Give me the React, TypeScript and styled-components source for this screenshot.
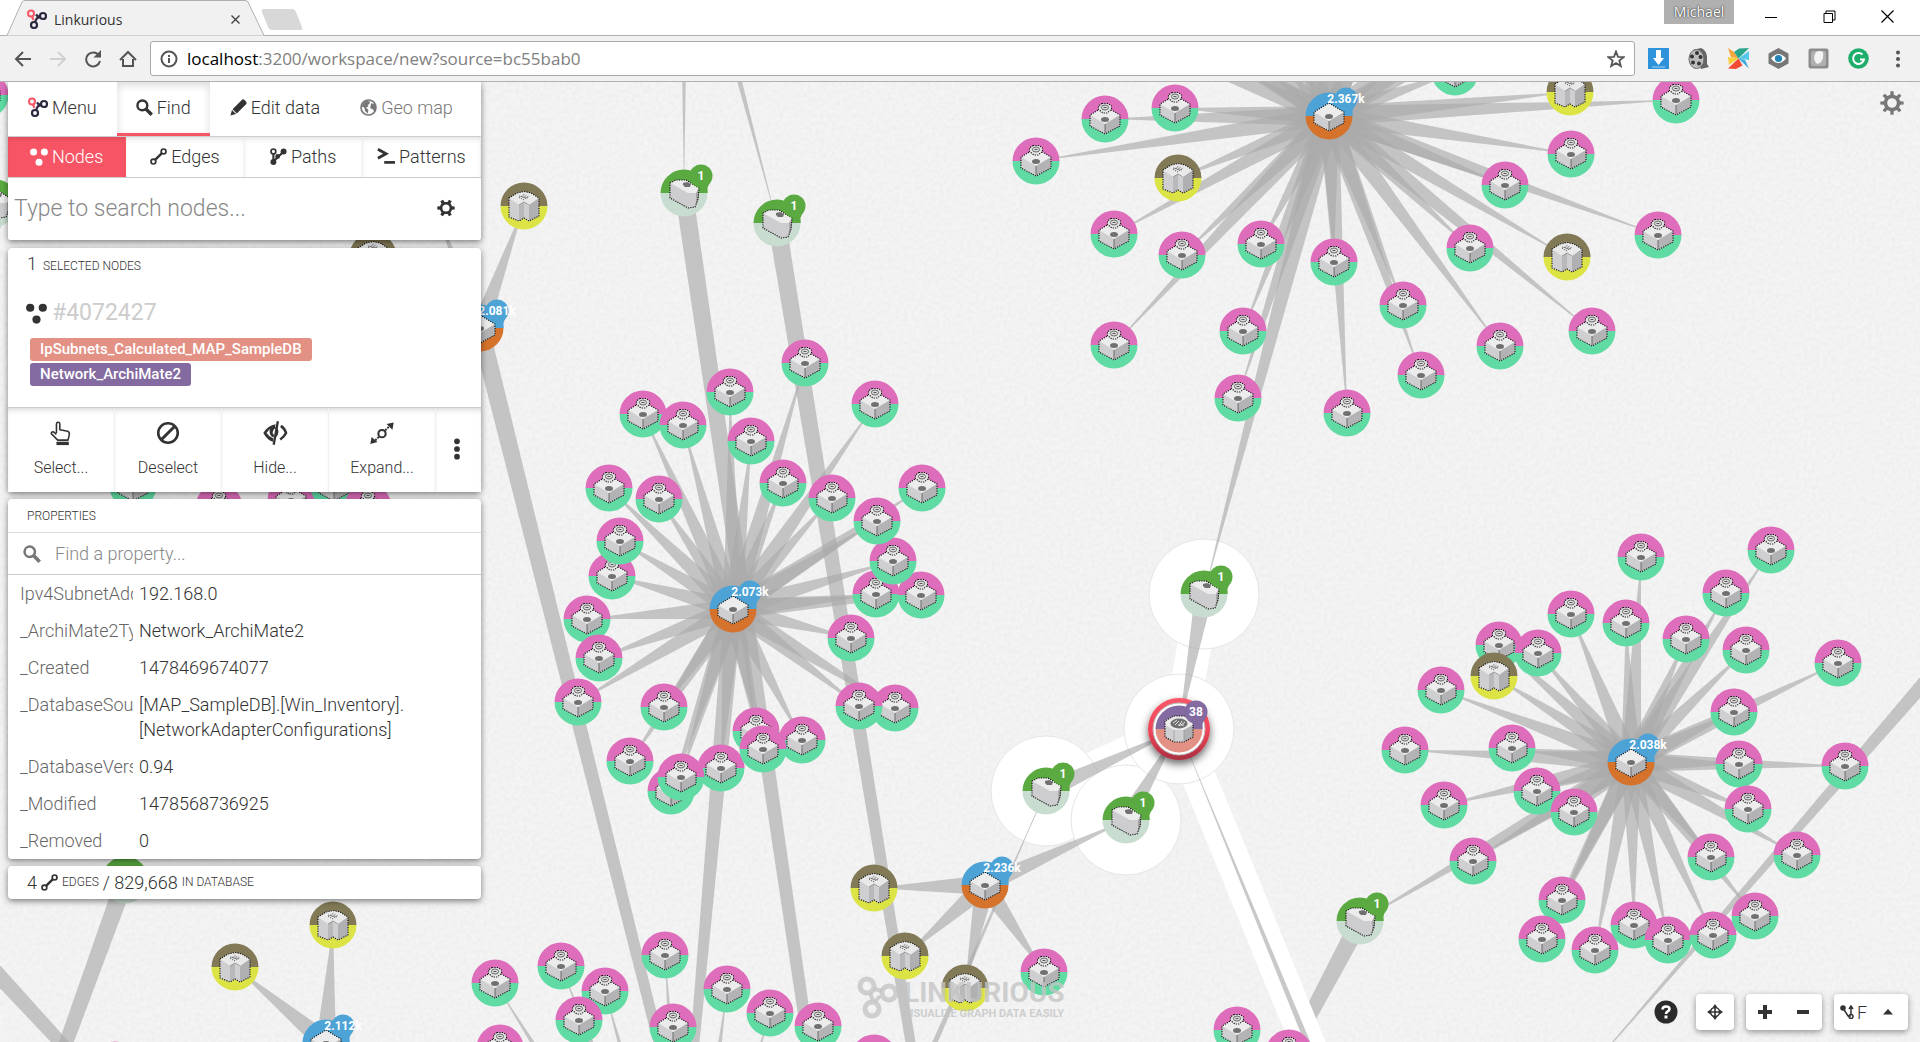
import React from "react";
import styled, { createGlobalStyle, css } from "styled-components";

const ui = `Roboto, "Liberation Sans", sans-serif`;
const system = `"Open Sans", "Noto Sans", sans-serif`;
const ink = "#333";
const accent = "#f75565";

const GlobalStyle = createGlobalStyle`
  *, *::before, *::after { box-sizing: border-box; }
  body { margin: 0; background: #f2f2f2; color: ${ink}; font-family: ${ui}; }
  button, input { font: inherit; color: inherit; }
  button { cursor: pointer; }
`;

/* ---------- browser frame ---------- */

const Page = styled.div`
  display: flex;
  flex-direction: column;
  height: 100vh;
  overflow: hidden;
`;

const TabStrip = styled.header`
  display: flex;
  align-items: flex-start;
  height: 36px;
  padding-left: 7px;
  background: #fff;
  border-bottom: 1px solid #b0b0b0;
  font-family: ${system};
`;

const BrowserTab = styled.div`
  display: grid;
  width: 258px;
  height: 36px;
  margin-bottom: -1px;
  > * { grid-area: 1 / 1; }
`;

const TabShape = styled.svg`
  width: 258px;
  height: 36px;
`;

const TabContent = styled.div`
  display: flex;
  align-items: center;
  gap: 7px;
  height: 36px;
  padding: 2px 25px 0 20px;
  font-size: 14px;
`;

const TabTitle = styled.span`
  flex: 1;
`;

const PlainButton = styled.button`
  display: grid;
  place-items: center;
  padding: 0;
  border: 0;
  background: none;
`;

const NewTab = styled.button`
  width: 34px;
  height: 21px;
  margin: 9px 0 0 0;
  padding: 0;
  border: 0;
  border-radius: 3px;
  background: #d8d8d8;
  transform: skewX(22deg);
`;

const WindowControls = styled.div`
  display: flex;
  align-items: flex-start;
  margin-left: auto;
  padding-right: 4px;
`;

const Profile = styled.button`
  width: 70px;
  height: 24px;
  margin-right: 8px;
  padding: 0;
  border: 0;
  background: #b0b0b0;
  color: #fff;
  font-size: 14px;
  line-height: 22px;
  text-shadow: 0 0 2px #333, 0 0 1px #333;
`;

const WindowButton = styled(PlainButton)`
  width: 58px;
  height: 33px;
`;

const AddressRow = styled.div`
  display: flex;
  align-items: center;
  height: 46px;
  padding: 0 2px 0 5px;
  background: #f1f1f1;
  border-bottom: 1px solid #b0b0b0;
  flex: none;
`;

const NavButton = styled(PlainButton)`
  width: 35px;
  height: 34px;
`;

const AddressBox = styled.div`
  display: flex;
  flex: 1;
  align-items: center;
  gap: 9px;
  height: 35px;
  margin: 0 3px 0 5px;
  padding: 0 9px;
  background: #fff;
  border: 1px solid #a9a9a9;
  border-radius: 3px;
  font-family: ${system};
  font-size: 17px;
`;

const Url = styled.span`
  flex: 1;
  color: #808080;
  strong { color: #000; font-weight: 400; }
`;

const ExtensionButton = styled(PlainButton)`
  width: 40px;
  height: 34px;
`;

/* ---------- workspace ---------- */

const Workspace = styled.main`
  display: grid;
  grid-template: minmax(0, 1fr) / minmax(0, 1fr);
  flex: 1;
  min-height: 0;
  overflow: hidden;
  > * { grid-area: 1 / 1; }
`;

const GraphCanvas = styled.svg`
  width: 100%;
  height: 100%;
  display: block;
`;

const Overlay = styled.div`
  display: flex;
  justify-content: space-between;
  padding: 0 12px 12px 8px;
  pointer-events: none;
  z-index: 1;
  > * { pointer-events: auto; }
`;

const SidePanel = styled.aside`
  display: flex;
  flex-direction: column;
  width: 473px;
  font-weight: 300;
`;

const Card = styled.section`
  background: #fff;
  border-radius: 4px;
  box-shadow: 0 2px 6px rgba(0, 0, 0, 0.5);
`;

const SearchCard = styled(Card)`
  border-radius: 0 0 2px 2px;
`;

const SelectionCard = styled(Card)`
  margin-top: 8px;
`;

const PropertyCard = styled(Card)`
  margin-top: 7px;
  padding-top: 1px;
`;

const SummaryCard = styled(Card)`
  margin-top: 7px;
  padding: 0 19px;
`;

const MainNav = styled.nav`
  display: flex;
  height: 55px;
  border-bottom: 1px solid #ccc;
`;

const MainNavItem = styled.button<{ $active?: boolean; $muted?: boolean }>`
  display: flex;
  align-items: center;
  gap: 4px;
  height: 54px;
  padding: 0 20px 4px;
  border: 0;
  background: #fff;
  font-size: 18px;
  color: ${(p) => (p.$muted ? "#777" : ink)};
  ${(p) =>
    p.$active &&
    css`
      padding: 0 19px;
      border-bottom: 3px solid ${accent};
      box-shadow: inset 0 3px 8px rgba(0, 0, 0, 0.15);
    `}
`;

const SubNav = styled.nav`
  display: grid;
  grid-template-columns: repeat(4, 1fr);
  height: 41px;
  border-bottom: 1px solid #ccc;
`;

const SubNavItem = styled.button<{ $active?: boolean }>`
  display: flex;
  align-items: center;
  justify-content: center;
  gap: 4px;
  padding: 0 0 1px;
  border: 0;
  border-right: 1px solid #f0f0f0;
  font-size: 18px;
  background: ${(p) => (p.$active ? accent : "#fff")};
  color: ${(p) => (p.$active ? "#fff" : ink)};
  box-shadow: inset 0 4px 6px -3px rgba(0, 0, 0, 0.15);
  ${(p) => p.$active && "border-right-color: transparent;"}
`;

const NodeSearch = styled.label`
  display: flex;
  align-items: center;
  height: 62px;
  padding: 0 26px 2px 6px;
`;

const TextInput = styled.input<{ $size: number }>`
  flex: 1;
  min-width: 0;
  padding: 0;
  border: 0;
  outline: 0;
  background: none;
  font-size: ${(p) => p.$size}px;
  &::placeholder { color: #888; opacity: 1; }
`;

const Heading = styled.h2`
  display: flex;
  align-items: baseline;
  gap: 6px;
  margin: 0;
  padding: 0 19px;
  font-size: 12px;
  font-weight: 300;
  line-height: 32px;
  text-transform: uppercase;
`;

const Count = styled.span`
  font-size: 18px;
`;

const NodeTitle = styled.div`
  display: flex;
  align-items: center;
  gap: 5px;
  margin-top: 17px;
  padding: 0 18px;
  font-size: 23px;
  font-weight: 400;
  line-height: 28px;
  color: #ccc;
`;

const TagList = styled.div`
  display: flex;
  flex-direction: column;
  align-items: flex-start;
  gap: 2px;
  padding: 11px 22px 21px;
`;

const Tag = styled.span<{ $color: string }>`
  height: 23px;
  padding: 0 10px;
  border-radius: 3px;
  background: ${(p) => p.$color};
  color: #fff;
  font-size: 15px;
  font-weight: 500;
  line-height: 23px;
`;

const Actions = styled.div`
  display: grid;
  grid-template-columns: repeat(4, 1fr) 45px;
  height: 85px;
  border-top: 1px solid #ccc;
`;

const ActionButton = styled.button`
  display: flex;
  flex-direction: column;
  align-items: center;
  justify-content: center;
  gap: 12px;
  padding: 0 0 3px;
  border: 0;
  border-right: 1px solid #f0f0f0;
  background: #fff;
  font-size: 16px;
  line-height: 20px;
  box-shadow: inset 0 5px 6px -4px rgba(0, 0, 0, 0.2);
  &:last-child { border-right: 0; padding-right: 4px; }
`;

const PropertySearch = styled.label`
  display: flex;
  align-items: center;
  gap: 14px;
  height: 43px;
  padding: 0 15px;
  border-top: 1px solid #ddd;
  border-bottom: 1px solid #ccc;
`;

const PropertyTable = styled.table`
  width: 100%;
  table-layout: fixed;
  border-collapse: collapse;
  font-size: 18px;
  line-height: 25px;
  text-align: left;
`;

const Key = styled.th`
  width: 125px;
  padding: 6px 0 6px 12px;
  color: #666;
  font-weight: 300;
  vertical-align: top;
  span { display: block; overflow: hidden; white-space: nowrap; }
`;

const Value = styled.td`
  padding: 6px;
`;

const Summary = styled.p`
  display: flex;
  align-items: center;
  gap: 4px;
  margin: 0;
  font-size: 12px;
  line-height: 33px;
  text-transform: uppercase;
`;

const RightTools = styled.div`
  display: flex;
  flex-direction: column;
  align-items: flex-end;
  justify-content: space-between;
`;

const SettingsButton = styled(PlainButton)`
  width: 32px;
  height: 41px;
  color: #777;
`;

const Tint = styled.span<{ $color: string }>`
  display: flex;
  color: ${(p) => p.$color};
`;

const ToolBar = styled.div`
  display: flex;
  align-items: center;
  gap: 12px;
`;

const HelpButton = styled(PlainButton)`
  margin-right: 6px;
`;

const ToolGroup = styled.div`
  display: flex;
  height: 36px;
  background: #fff;
  border-radius: 4px;
  box-shadow: 0 2px 6px rgba(0, 0, 0, 0.4);
`;

const ToolButton = styled(PlainButton)`
  width: 38px;
`;

const ModeButton = styled(PlainButton)`
  grid-auto-flow: column;
  justify-content: start;
  gap: 3px;
  width: 74px;
  padding-left: 6px;
  font-size: 18px;
  font-weight: 300;
`;

/* ---------- icons ---------- */

const Icon = ({ size = 20, children }: { size?: number; children: React.ReactNode }) => (
  <svg width={size} height={size} viewBox="0 0 20 20" fill="none" stroke="currentColor" strokeWidth="2" aria-hidden="true">
    {children}
  </svg>
);

const Logo = () => (
  <Icon>
    <g stroke="#2c2840" strokeWidth="2.2">
      <circle cx="16" cy="7" r="3" />
      <circle cx="7" cy="16" r="3" />
      <path d="M8 13l2-4M9.500 9.500L13 8M9 5.500q1.500 2 3.500 2.500" />
    </g>
    <circle cx="4" cy="4.500" r="3" stroke="#f75565" strokeWidth="2" />
    <path d="M5 7.500L6.500 11" stroke="#f75565" strokeWidth="2" />
  </Icon>
);

const SearchIcon = ({ size = 17 }: { size?: number }) => (
  <Icon size={size}>
    <circle cx="7.500" cy="7.500" r="5.800" strokeWidth="2.800" />
    <path d="M12 12l6.500 6.500" strokeWidth="4" />
  </Icon>
);

const PencilIcon = () => (
  <Icon size={17}>
    <path d="M14.500 0.500Q16 0 18 2T19.500 5.500L8 17L3 12ZM2.300 13l4.800 4.500L0.500 19.500Z" fill="currentColor" stroke="none" />
  </Icon>
);

const GlobeIcon = () => (
  <Icon size={17}>
    <circle cx="10" cy="10" r="8.800" />
    <path d="M3 6l4-4 5 1-1 3-2 1 1 2-3 1 3 3-1 4-3-3-1-4-3-1ZM13 5l4 1 2 5-2 4-2-3-3-1Z" fill="currentColor" stroke="none" />
  </Icon>
);

const NodesIcon = ({ size = 18 }: { size?: number }) => (
  <Icon size={size}>
    <g fill="currentColor" stroke="none">
      <circle cx="4" cy="4.500" r="3.900" />
      <circle cx="16" cy="4.500" r="3.900" />
      <circle cx="10" cy="15.800" r="3.900" />
    </g>
  </Icon>
);

const EdgeIcon = () => (
  <Icon size={17}>
    <circle cx="16" cy="4" r="2.800" />
    <circle cx="4" cy="16" r="2.800" />
    <path d="M6 14l8-8" strokeWidth="2.800" />
  </Icon>
);

const PathIcon = () => (
  <Icon size={17}>
    <circle cx="4" cy="4" r="2.800" />
    <circle cx="16" cy="4" r="3.500" fill="currentColor" stroke="none" />
    <circle cx="4" cy="16.500" r="3.500" fill="currentColor" stroke="none" />
    <path d="M4 16V7M16 4L4 16" strokeWidth="2.500" />
    <circle cx="9" cy="10" r="1.800" fill="currentColor" />
  </Icon>
);

const PatternIcon = () => (
  <Icon size={18}>
    <path d="M1 1.500l9 5-9 5" strokeWidth="3.200" />
    <path d="M8 16h12" strokeWidth="3" />
  </Icon>
);

const cogPath = (teeth: number, outer: number, inner: number) => {
  const points: string[] = [];
  const step = (Math.PI * 2) / teeth;
  for (let i = 0; i < teeth; i++) {
    const a = i * step - Math.PI / 2 + (teeth === 6 ? step / 2 : 0);
    [[-0.26, inner], [-0.17, outer], [0.17, outer], [0.26, inner]].forEach(([o, r]) => {
      points.push(`${(10 + Math.cos(a + o * step) * r).toFixed(2)} ${(10 + Math.sin(a + o * step) * r).toFixed(2)}`);
    });
  }
  return `M${points.join("L")}Z`;
};

const CogIcon = ({ size, teeth, hole = 3.6 }: { size: number; teeth: number; hole?: number }) => (
  <Icon size={size}>
    <path d={`${cogPath(teeth, 9.8, 7)}M${10 - hole} 10a${hole} ${hole} 0 1 0 ${hole * 2} 0a${hole} ${hole} 0 1 0 ${-hole * 2} 0Z`} fill="currentColor" fillRule="evenodd" stroke="none" />
  </Icon>
);

const HandIcon = () => (
  <Icon size={26}>
    <path d="M6.500 10V3a1.300 1.300 0 0 1 2.600 0v4.500l6 1.200q1.500.5 1.300 2.300l-1 4.500H7.500L2.500 10.500q-.2-1.500 1.500-1.500l2.500 2" strokeWidth="1.200" strokeLinejoin="round" />
    <path d="M6.500 18h9.500" strokeWidth="2.600" />
  </Icon>
);

const BanIcon = () => (
  <Icon size={26}>
    <circle cx="10" cy="10" r="7.500" strokeWidth="2" />
    <path d="M5 15L15 5" strokeWidth="2.300" />
  </Icon>
);

const HideIcon = () => (
  <Icon size={26}>
    <path d="M12.200 1L9 19" strokeWidth="1.800" />
    <path d="M10.500 3.200Q4.500 4 1 10q3 5.500 7.500 6.800V14Q5.500 13 3.500 10 5 8 6 7Q5 12 8.800 13.500L9.300 11.500Q7 10 9.500 7Z" fill="currentColor" stroke="none" />
    <path d="M14.500 4.500Q17.500 6.500 18.500 10q-1.500 3-4.500 5" strokeWidth="2" />
    <path d="M9 5.500Q12.500 6.500 12 9.500T10 12.500" strokeWidth="1.200" />
  </Icon>
);

const ExpandIcon = () => (
  <Icon size={26}>
    <circle cx="10" cy="10.500" r="2.800" strokeWidth="1.600" />
    <path d="M12.500 8l3.500-3.500M7.500 13l-3.500 3.500" strokeWidth="1.500" strokeDasharray="1.500 .8" />
    <path d="M13.500 3l5.500-1-1 5.500ZM2 13l-1 5.500 5.500-1.500Z" fill="currentColor" stroke="none" />
  </Icon>
);

const DotsIcon = () => (
  <Icon size={22}>
    <g fill="currentColor" stroke="none">
      <circle cx="10" cy="3" r="2.600" />
      <circle cx="10" cy="10" r="2.600" />
      <circle cx="10" cy="17" r="2.600" />
    </g>
  </Icon>
);

/* ---------- graph ---------- */

type Point = [number, number];
type Kind = "host" | "hub" | "building" | "wedge" | "selected";
type GraphNode = { at: Point; kind: Kind; badge?: string };
type Edge = { from: Point; to: Point; width?: number };

const hubWest: Point = [733, 609];
const hubNorth: Point = [1329, 116];
const hubEast: Point = [1631, 762];
const hubSouth: Point = [985, 885];
const hubPanel: Point = [480, 328];
const hubCorner: Point = [326, 1043];
const hubBelow: Point = [688, 1290];
const picked: Point = [1179, 729];
const wedgeTop: Point = [1204, 594];
const wedgeLeft: Point = [1046, 791];
const wedgeMid: Point = [1126, 820];
const wedgeEast: Point = [1360, 921];

const westHosts: Point[] = [
  [609, 488], [659, 499], [612, 576], [620, 541], [587, 619], [599, 658], [578, 702], [664, 707],
  [630, 761], [671, 791], [721, 768], [681, 777], [756, 731], [802, 740], [763, 749], [895, 708],
  [859, 706], [851, 638], [876, 594], [921, 595], [893, 561], [922, 488], [877, 521], [832, 498],
  [783, 483], [751, 441], [643, 414], [683, 425], [730, 392], [805, 363], [875, 404],
];
const northHosts: Point[] = [
  [1105, 119], [1175, 108], [1036, 161], [1114, 234], [1182, 255], [1261, 244], [1334, 262],
  [1243, 331], [1114, 345], [1238, 398], [1347, 413], [1403, 305], [1421, 375], [1500, 346],
  [1592, 331], [1470, 248], [1658, 235], [1505, 185], [1571, 154], [1676, 100], [1455, 72],
];
const northBuildings: Point[] = [[1178, 178], [1567, 257], [1570, 92]];
const northBeyond: Point[] = [
  [1090, 20], [1130, 0], [1170, -20], [1230, -20], [1270, -60], [1310, -80], [1360, -80], [1400, -40],
  [1440, 20], [1500, 10], [1560, -10], [1200, 40], [1240, -90], [1420, -90],
];
const eastHosts: Point[] = [
  [1641, 557], [1771, 550], [1726, 593], [1571, 614], [1626, 623], [1686, 639], [1746, 650], [1838, 663],
  [1499, 645], [1538, 653], [1441, 690], [1734, 712], [1405, 750], [1512, 748], [1739, 764], [1845, 766],
  [1537, 791], [1574, 812], [1444, 805], [1748, 809], [1711, 857], [1797, 855], [1473, 861], [1562, 900],
  [1542, 939], [1595, 950], [1634, 925], [1668, 940], [1713, 935], [1755, 916],
];
const eastBuilding: Point = [1494, 676];
const belowHosts: Point[] = [
  [495, 983], [561, 966], [605, 991], [579, 1020], [665, 955], [673, 1027], [727, 989], [770, 1013],
  [818, 1026], [500, 1048], [874, 1058],
];
const southBuildings: Point[] = [[874, 888], [905, 956], [965, 988]];
const southHost: Point = [1044, 972];
const strayHosts: Point[] = [
  [1237, 1030], [1289, 1053], [-15, 95], [115, 1065], [133, 486], [219, 507], [291, 500], [334, 486], [368, 507],
];
const strayBuildings: Point[] = [[524, 206], [373, 256], [235, 967], [333, 925]];

const fan = (from: Point, targets: Point[]): Edge[] => targets.map((to) => ({ from, to, width: 20 }));

const edges: Edge[] = [
  ...fan(hubWest, westHosts),
  ...fan(hubNorth, [...northHosts, ...northBuildings, ...northBeyond]),
  ...fan(hubEast, [...eastHosts, eastBuilding, wedgeEast]),
  ...fan(hubBelow, belowHosts),
  ...fan(hubSouth, [...southBuildings, southHost]),
  ...fan(hubCorner, [[235, 967], [333, 925]]),
  { from: hubPanel, to: [524, 206] },
  { from: hubPanel, to: [905, 2028] },
  { from: hubPanel, to: [440, 220] },
  { from: [684, 193], to: [1041, 2638] },
  { from: [777, 223], to: [1075, 2053] },
  { from: hubWest, to: [657, 1475] },
  { from: [684, -600], to: [684, 193], width: 24 },
  { from: [586, -500], to: [777, 223], width: 24 },
  { from: [125, 880], to: [-150, 1640] },
  { from: [-60, 912], to: [400, 1410] },
  { from: [-60, 360], to: [10, 203] },
  { from: wedgeEast, to: [1120, 1374] },
  { from: [2030, 561], to: [1580, 1080] },
  { from: [680, 1619], to: wedgeLeft, width: 17 },
];

const litEdges: Edge[] = [
  { from: wedgeTop, to: picked },
  { from: wedgeLeft, to: picked },
  { from: wedgeMid, to: picked },
  { from: [1589, 1729], to: picked },
];

const passingEdges: Edge[] = [
  { from: hubNorth, to: wedgeTop, width: 22 },
  { from: hubSouth, to: wedgeMid },
];

const nodes: GraphNode[] = [
  ...[...strayHosts, ...westHosts, ...northHosts, ...eastHosts, ...belowHosts].map((at) => ({ at, kind: "host" as Kind })),
  ...[...northBuildings, ...southBuildings, eastBuilding, ...strayBuildings].map((at) => ({ at, kind: "building" as Kind })),
  { at: southHost, kind: "host" },
  { at: [-5, 203], kind: "wedge" },
  { at: [125, 880], kind: "wedge" },
  { at: [684, 193], kind: "wedge", badge: "1" },
  { at: [777, 223], kind: "wedge", badge: "1" },
  { at: wedgeTop, kind: "wedge", badge: "1" },
  { at: wedgeLeft, kind: "wedge", badge: "1" },
  { at: wedgeMid, kind: "wedge", badge: "1" },
  { at: wedgeEast, kind: "wedge", badge: "1" },
  { at: hubWest, kind: "hub", badge: "2.073k" },
  { at: hubNorth, kind: "hub", badge: "2.367k" },
  { at: hubEast, kind: "hub", badge: "2.038k" },
  { at: hubSouth, kind: "hub", badge: "2.236k" },
  { at: hubPanel, kind: "hub", badge: "2.081k" },
  { at: hubCorner, kind: "hub", badge: "2.112k" },
  { at: picked, kind: "selected", badge: "38" },
];

const palette: Record<Kind, [string, string]> = {
  host: ["#de6dbb", "#60dba4"],
  hub: ["#4ea3d6", "#d5722b"],
  building: ["#827956", "#dce344"],
  wedge: ["#5aaa41", "#c8ddd0"],
  selected: ["#836aa0", "#e39184"],
};

/** An edge is a sliver: full width at its source, a point at its target. */
const sliver = ({ from, to, width = 18 }: Edge) => {
  const dx = to[0] - from[0];
  const dy = to[1] - from[1];
  const k = width / 2 / Math.hypot(dx, dy);
  return `${from[0] - dy * k},${from[1] + dx * k} ${to[0]},${to[1]} ${from[0] + dy * k},${from[1] - dx * k}`;
};

const Slivers = ({ list }: { list: Edge[] }) => (
  <g fill="#aaa" fillOpacity="0.65">
    {list.map((e, i) => (
      <polygon key={i} points={sliver(e)} />
    ))}
  </g>
);

const dotted = { stroke: "#111", strokeWidth: 1.1, strokeDasharray: "1.200 1.200" };

const Glyphs = () => (
  <defs>
    <g id="glyph-box">
      <path d="M0-13L15-4V7L0 15L-15 7V-4Z" fill="#ececec" />
      <path d="M-15-4L0 5V15L-15 7Z" fill="#cfcfd1" />
      <path d="M15-4L0 5V15L15 7Z" fill="#b3b3b5" />
      <path d="M0-13L15-4V7L0 15L-15 7V-4Z" fill="none" {...dotted} />
      <path d="M0 5V14" stroke="#555" strokeWidth=".8" />
      <ellipse cx="0" cy="0.500" rx="4" ry="2.500" fill="#707070" />
    </g>
    <g id="glyph-host">
      <use href="#glyph-box" />
      <path d="M-3-15.500H3L6.500-13V-9.500L2-6H-2L-6.500-9.500V-13Z" fill="#e4e4e4" {...dotted} />
      <ellipse cx="0" cy="-11.500" rx="3.600" ry="2.500" fill="#ddd" stroke="#666" strokeWidth="1" />
      <path d="M-1.500-11.500H1.500" stroke="#555" strokeWidth="1" />
    </g>
    <g id="glyph-building">
      <path d="M-15-8L-7-13L0-14.500L7-13L15-8V10L5 15L0 12L-5 15L-15 11Z" fill="#e9e9e9" />
      <path d="M-15-8L-5-1V15L-15 11ZM0-4L5 0V15L0 12Z" fill="#cfcfd1" />
      <path d="M-5-1L0-4V12L-5 15Z" fill="#b9b9bb" />
      <path d="M15-8L5-1V15L15 10Z" fill="#b0b0b2" />
      <path d="M-15-8L-7-13L0-14.500L7-13L15-8V10L5 15L0 12L-5 15L-15 11Z" fill="none" {...dotted} />
      <path d="M-5-1L0-4L5-1" fill="none" stroke="#888" strokeWidth=".8" />
      <path d="M-5-8L1-12M-3-7L3-11M-1-6L5-10M-5-10L4-8" stroke="#666" strokeWidth="1" strokeDasharray="1.500 1" />
    </g>
    <g id="glyph-wedge">
      <path d="M-14-10L-8-13L2-13L15-5L14 6L11 14L4 15L-14 5Z" fill="#cdcdd0" />
      <path d="M-14-10L-8-13L2-13L15-5L12 0L4 0Z" fill="#ececec" />
      <path d="M15-5L12 0V13L15 5Z" fill="#a8a8aa" />
      <path d="M-14-10L-8-13L2-13L15-5L14 6L11 14L4 15L-14 5Z" fill="none" {...dotted} />
      <path d="M-1-10L3-11L7-9L6-6L1-6L-1-8Z" fill="#707070" />
    </g>
    <g id="glyph-selected">
      <path d="M-5-13H5L14-8V8L5 13H-5L-14 8V-8Z" fill="#cfcfd1" />
      <path d="M-5-13H5L14-8V-4L5 1H-5L-14-4V-8Z" fill="#ebebeb" />
      <path d="M14-4L5 1V13L14 8Z" fill="#b0b0b2" />
      <path d="M-5-13H5L14-8V8L5 13H-5L-14 8V-8Z" fill="none" {...dotted} />
      <path d="M-5 1V13M5 1V13" stroke="#999" strokeWidth=".8" />
      <ellipse cx="0" cy="-5.500" rx="8.500" ry="5" fill="#6f6f6f" />
      <path d="M-6-6L-2-9M-4-4L0-8M2-4L6-7M3-8L0-3M-1-4H5" stroke="#e4e4e4" strokeWidth="1" />
    </g>
    <linearGradient id="ring" x1="0" y1="0" x2="0" y2="1">
      <stop offset="0" stopColor="#f95768" />
      <stop offset=".55" stopColor="#f04457" />
      <stop offset="1" stopColor="#a82f40" />
    </linearGradient>
    <filter id="drop" x="-50%" y="-50%" width="200%" height="200%">
      <feDropShadow dx="0" dy="4" stdDeviation="4" floodColor="#000" floodOpacity="0.6" />
    </filter>
    <filter id="paper" x="0" y="0" width="100%" height="100%">
      <feTurbulence type="fractalNoise" baseFrequency="0.25" numOctaves="2" stitchTiles="stitch" />
      <feColorMatrix type="matrix" values="0 0 0 0 0.5  0 0 0 0 0.5  0 0 0 0 0.5  0.22 0 0 0 -0.07" />
    </filter>
  </defs>
);

const glyphOf: Record<Kind, string> = {
  host: "#glyph-host",
  hub: "#glyph-box",
  building: "#glyph-building",
  wedge: "#glyph-wedge",
  selected: "#glyph-selected",
};

const NodeMark = ({ at, kind, badge }: GraphNode) => {
  const [top, bottom] = palette[kind];
  return (
    <g transform={`translate(${at[0]} ${at[1]})`}>
      {kind === "selected" && (
        <>
          <circle r="31" fill="url(#ring)" filter="url(#drop)" />
          <circle r="26" fill="#fff" stroke="#bbb" strokeWidth="1" />
        </>
      )}
      <path d="M-23.500 0a23.500 23.500 0 0 1 47 0Z" fill={top} />
      <path d="M-23.500 0a23.500 23.500 0 0 0 47 0Z" fill={bottom} />
      <use href={glyphOf[kind]} />
      {badge && (
        <>
          <circle cx="17" cy="-17" r="11.500" fill={top} />
          <path d="M17-12H26L23.500-5V0H17Z" fill={top} />
          <text x="17" y="-13" textAnchor="middle" fill="#fff" fontFamily={ui} fontWeight="700" fontSize="12">
            {badge}
          </text>
        </>
      )}
    </g>
  );
};

const Graph = () => (
  <GraphCanvas role="img" aria-label="Network graph">
    <Glyphs />
    <rect width="100%" height="100%" fill="#f4f4f4" />
    <rect width="100%" height="100%" filter="url(#paper)" />
    <g transform="translate(0 -82)">
      <Slivers list={edges} />
      <g stroke="#fff" strokeWidth="34">
        {litEdges.map((e, i) => (
          <line key={i} x1={e.from[0]} y1={e.from[1]} x2={e.to[0]} y2={e.to[1]} />
        ))}
      </g>
      <g fill="#fff" stroke="#e6e6e6" strokeWidth="1">
        {[wedgeTop, wedgeLeft, wedgeMid, picked].map(([x, y], i) => (
          <circle key={i} cx={x} cy={y} r="55" />
        ))}
      </g>
      <line x1="1046" y1="791" x2="1008" y2="876" stroke="#c3c3c3" strokeWidth="1" />
      <Slivers list={[...passingEdges, ...litEdges]} />
      {nodes.map((n, i) => (
        <NodeMark key={i} {...n} />
      ))}
      <g fill="#c4c4c4" fillOpacity="0.8" fontFamily={ui} fontWeight="700">
        <g fill="none" stroke="#c4c4c4" strokeOpacity="0.8" strokeWidth="5">
          <circle cx="867" cy="986" r="7" />
          <circle cx="889" cy="993" r="7" />
          <circle cx="872" cy="1009" r="7" />
          <path d="M870 993L873 1001M880 996L875 1002M874 989L882 991" strokeWidth="4" />
        </g>
        <text x="904" y="1002" fontSize="28">LINKURIOUS</text>
        <text x="903" y="1017" fontSize="11">VISUALIZE GRAPH DATA EASILY</text>
      </g>
    </g>
  </GraphCanvas>
);

/* ---------- data ---------- */

const properties: [string, string][] = [
  ["Ipv4SubnetAddress", "192.168.0"],
  ["_ArchiMate2Type", "Network_ArchiMate2"],
  ["_Created", "1478469674077"],
  ["_DatabaseSource", "[MAP_SampleDB].[Win_Inventory].[NetworkAdapterConfigurations]"],
  ["_DatabaseVersion", "0.94"],
  ["_Modified", "1478568736925"],
  ["_Removed", "0"],
];

const Browser = () => (
  <>
    <TabStrip>
      <BrowserTab>
        <TabShape viewBox="0 0 258 36" aria-hidden="true">
          <path d="M0 35.500L15 2Q16 .5 18 .5H238Q240 .5 241 2L257 35.500" fill="#f1f1f1" stroke="#b0b0b0" />
        </TabShape>
        <TabContent>
          <Logo />
          <TabTitle>Linkurious</TabTitle>
          <PlainButton aria-label="Close tab">
            <svg width="9" height="9" viewBox="0 0 9 9" stroke="#444" strokeWidth="1.400"><path d="M.5.5l8 8M8.500.5l-8 8" /></svg>
          </PlainButton>
        </TabContent>
      </BrowserTab>
      <NewTab aria-label="New tab" />
      <WindowControls>
        <Profile>Michael</Profile>
        <WindowButton aria-label="Minimize">
          <svg width="12" height="12" stroke="#000"><path d="M0 6.500h12" /></svg>
        </WindowButton>
        <WindowButton aria-label="Restore">
          <svg width="13" height="13" fill="none" stroke="#000"><path d="M1 3.500h8.500v9h-8.500ZM3 3.500v-2.500h9v9h-2.500" /></svg>
        </WindowButton>
        <WindowButton aria-label="Close">
          <svg width="13" height="13" stroke="#000" strokeWidth="1.200"><path d="M.5.5l12 12M12.500.5l-12 12" /></svg>
        </WindowButton>
      </WindowControls>
    </TabStrip>
    <AddressRow>
      <NavButton aria-label="Back">
        <svg width="18" height="18" fill="none" stroke="#555" strokeWidth="2"><path d="M17 9H2M9 2L2 9l7 7" /></svg>
      </NavButton>
      <NavButton aria-label="Forward" disabled>
        <svg width="18" height="18" fill="none" stroke="#d0d0d0" strokeWidth="2"><path d="M1 9h15M9 2l7 7-7 7" /></svg>
      </NavButton>
      <NavButton aria-label="Reload">
        <svg width="18" height="18" fill="none" stroke="#555" strokeWidth="2"><path d="M15 5.500A7 7 0 1 0 16 11" /><path d="M17 0v7.500H9.500Z" fill="#555" stroke="none" /></svg>
      </NavButton>
      <NavButton aria-label="Home">
        <svg width="18" height="18" fill="none" stroke="#555" strokeWidth="2"><path d="M1 10L9 2l8 8M4 9v7h10V9" /></svg>
      </NavButton>
      <AddressBox>
        <svg width="18" height="18" fill="none" stroke="#555" strokeWidth="2"><circle cx="9" cy="9" r="7.500" /><path d="M9 8v5M9 5v2" /></svg>
        <Url><strong>localhost</strong>:3200/workspace/new?source=bc55bab0</Url>
        <PlainButton aria-label="Bookmark">
          <svg width="18" height="18" viewBox="0 0 18 18" fill="none" stroke="#555" strokeWidth="1.800"><path d="M9 1.500l2 5.300 5.700.3-4.400 3.500 1.500 5.500L9 13l-4.800 3.100 1.500-5.500L1.300 7.100 7 6.800Z" /></svg>
        </PlainButton>
      </AddressBox>
      <ExtensionButton aria-label="Downloads">
        <svg width="21" height="21"><rect width="21" height="21" fill="#2f93dc" /><path d="M8 2h5v8h3l-5.500 7L5 10h3Z" fill="#fff" /><path d="M4 19h13" stroke="#a5d3f5" /></svg>
      </ExtensionButton>
      <ExtensionButton aria-label="Video">
        <svg width="21" height="21"><path d="M5 2L13 0q5 2 6 8v8l2 3-8 2Z" fill="#666" /><ellipse cx="8.500" cy="11" rx="7.500" ry="9.500" fill="#bcbcbc" stroke="#666" /><g fill="#333"><circle cx="9" cy="5" r="2" /><circle cx="4" cy="8.500" r="2" /><circle cx="12.500" cy="9" r="2" /><circle cx="5" cy="14.500" r="2" /><circle cx="11" cy="15.500" r="2" /></g></svg>
      </ExtensionButton>
      <ExtensionButton aria-label="Pinwheel">
        <svg width="21" height="21"><path d="M0 0l6 4 4.500 6.500L3 9Z" fill="#f9a53a" /><path d="M0 9l10.500 1.500L1 17Z" fill="#fbd03c" /><path d="M10.500 10.500L6 4l5-3.500 10-.5Z" fill="#2ba58c" /><path d="M21 3v9l-10.500-1.500Z" fill="#55c8ec" /><path d="M10.500 10.500L17 12l4 8.500Z" fill="#3aa9dc" /><path d="M10.500 10.500l4 7L8 21l-8-.5Z" fill="#f14a35" /></svg>
      </ExtensionButton>
      <ExtensionButton aria-label="Watcher">
        <svg width="21" height="21"><path d="M10.500 0l10 5.500v10l-10 5.500-10-5.500v-10Z" fill="#777" /><path d="M3 10.500q7.500-9 15 0-7.500 9-15 0" fill="#fff" /><circle cx="10.500" cy="10.500" r="3.600" fill="#2384b5" /></svg>
      </ExtensionButton>
      <ExtensionButton aria-label="Shield">
        <svg width="21" height="21"><rect x=".5" y=".5" width="20" height="20" rx="2" fill="#8d8d8d" /><rect x="3" y="3" width="15" height="15" rx="2" fill="#b0b0b0" /><path d="M8 4q4-2 7 0 1 6-2 10-3 3-5 1-4-5 0-11" fill="#f3f3f3" /></svg>
      </ExtensionButton>
      <ExtensionButton aria-label="Writing assistant">
        <svg width="21" height="21" fill="none"><circle cx="10.500" cy="10.500" r="10.300" fill="#1fad6b" /><path d="M14.500 6.500a5.500 5.500 0 1 0 1.500 5h-4" stroke="#fff" strokeWidth="2" /></svg>
      </ExtensionButton>
      <ExtensionButton aria-label="Browser menu">
        <svg width="4" height="18" fill="#555"><circle cx="2" cy="2.500" r="2" /><circle cx="2" cy="9" r="2" /><circle cx="2" cy="15.500" r="2" /></svg>
      </ExtensionButton>
    </AddressRow>
  </>
);

const Sidebar = () => (
  <SidePanel>
    <SearchCard>
      <MainNav>
        <MainNavItem><Logo />Menu</MainNavItem>
        <MainNavItem $active><SearchIcon />Find</MainNavItem>
        <MainNavItem><PencilIcon />Edit data</MainNavItem>
        <MainNavItem $muted><GlobeIcon />Geo map</MainNavItem>
      </MainNav>
      <SubNav>
        <SubNavItem $active><NodesIcon />Nodes</SubNavItem>
        <SubNavItem><EdgeIcon />Edges</SubNavItem>
        <SubNavItem><PathIcon />Paths</SubNavItem>
        <SubNavItem><PatternIcon />Patterns</SubNavItem>
      </SubNav>
      <NodeSearch>
        <TextInput $size={23} aria-label="Search nodes" placeholder="Type to search nodes..." />
        <PlainButton aria-label="Search options"><CogIcon size={18} teeth={6} hole={4} /></PlainButton>
      </NodeSearch>
    </SearchCard>
    <SelectionCard>
      <Heading><Count>1</Count>selected nodes</Heading>
      <NodeTitle>
        <Tint $color={ink}><NodesIcon size={21} /></Tint>
        #4072427
      </NodeTitle>
      <TagList>
        <Tag $color="#e39184">IpSubnets_Calculated_MAP_SampleDB</Tag>
        <Tag $color="#836aa0">Network_ArchiMate2</Tag>
      </TagList>
      <Actions>
        <ActionButton><HandIcon />Select...</ActionButton>
        <ActionButton><BanIcon />Deselect</ActionButton>
        <ActionButton><HideIcon />Hide...</ActionButton>
        <ActionButton><ExpandIcon />Expand...</ActionButton>
        <ActionButton aria-label="More actions"><DotsIcon /></ActionButton>
      </Actions>
    </SelectionCard>
    <PropertyCard>
      <Heading>Properties</Heading>
      <PropertySearch>
        <Tint $color="#777"><SearchIcon size={18} /></Tint>
        <TextInput $size={18} aria-label="Find a property" placeholder="Find a property..." />
      </PropertySearch>
      <PropertyTable>
        <tbody>
          {properties.map(([key, value]) => (
            <tr key={key}>
              <Key scope="row"><span>{key}</span></Key>
              <Value>{value}</Value>
            </tr>
          ))}
        </tbody>
      </PropertyTable>
    </PropertyCard>
    <SummaryCard>
      <Summary>
        <Count>4</Count><EdgeIcon />edges <Count>/ 829,668</Count> in database
      </Summary>
    </SummaryCard>
  </SidePanel>
);

const Tools = () => (
  <RightTools>
    <SettingsButton aria-label="Settings"><CogIcon size={24} teeth={8} hole={4} /></SettingsButton>
    <ToolBar>
      <HelpButton aria-label="Help">
        <svg width="24" height="24" viewBox="0 0 24 24"><circle cx="12" cy="12" r="11.500" fill="#2b2b2b" /><path d="M8.500 9.500q0-3 3.500-3t3.500 2.500q0 1.500-2 2.500-1.500 1-1.500 2.500" fill="none" stroke="#fff" strokeWidth="2.600" /><rect x="10.500" y="15.500" width="3" height="3" fill="#fff" /></svg>
      </HelpButton>
      <ToolGroup>
        <ToolButton aria-label="Center the graph">
          <svg width="16" height="16" viewBox="0 0 16 16" fill="none" stroke={ink}><circle cx="8" cy="8" r="4.500" strokeWidth="1.500" /><path d="M8 2v12M2 8h12" strokeWidth="1.600" /><path d="M8 0l2.500 3.500h-5ZM8 16l2.500-3.500h-5ZM0 8l3.500-2.500v5ZM16 8l-3.500-2.500v5Z" fill={ink} stroke="none" /></svg>
        </ToolButton>
      </ToolGroup>
      <ToolGroup>
        <ToolButton aria-label="Zoom in"><svg width="14" height="14" stroke={ink} strokeWidth="4"><path d="M7 0v14M0 7h14" /></svg></ToolButton>
        <ToolButton aria-label="Zoom out"><svg width="14" height="14" stroke={ink} strokeWidth="4"><path d="M1 7h12" /></svg></ToolButton>
      </ToolGroup>
      <ToolGroup>
        <ModeButton aria-label="Layout mode">
          <svg width="14" height="14" fill="none" stroke={ink} strokeWidth="1.500"><circle cx="3" cy="3" r="2.800" fill={ink} stroke="none" /><path d="M3 3l5 8h3M11 10V2M9 4l2-3 2 3" /><circle cx="11" cy="11.500" r="2" /></svg>
          F
          <svg width="24" height="6" fill={ink}><path d="M18 0l5 5.500h-10Z" /></svg>
        </ModeButton>
      </ToolGroup>
    </ToolBar>
  </RightTools>
);

export default function App() {
  return (
    <Page>
      <GlobalStyle />
      <Browser />
      <Workspace>
        <Graph />
        <Overlay>
          <Sidebar />
          <Tools />
        </Overlay>
      </Workspace>
    </Page>
  );
}
